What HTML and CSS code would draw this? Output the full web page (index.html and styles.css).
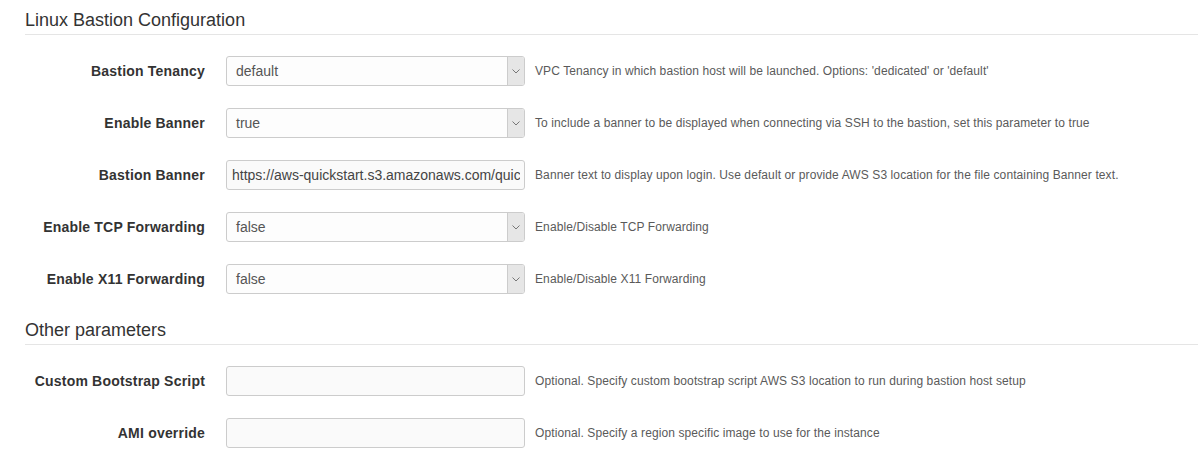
FILE: index.html
```html
<!DOCTYPE html>
<html>
<head>
<meta charset="utf-8">
<link rel="stylesheet" href="styles.css">
</head>
<body>
<div class="page">
  <section class="section">
    <h3 class="section-title">Linux Bastion Configuration</h3>
    <div class="rows">
      <div class="row">
        <label class="label">Bastion Tenancy</label>
        <div class="select"><span class="value">default</span><span class="arrow"><svg width="8" height="5" viewBox="0 0 8 5"><polyline points="0.5,0.5 4,4 7.5,0.5" fill="none" stroke="#777" stroke-width="1"/></svg></span></div>
        <div class="help">VPC Tenancy in which bastion host will be launched. Options: 'dedicated' or 'default'</div>
      </div>
      <div class="row">
        <label class="label">Enable Banner</label>
        <div class="select"><span class="value">true</span><span class="arrow"><svg width="8" height="5" viewBox="0 0 8 5"><polyline points="0.5,0.5 4,4 7.5,0.5" fill="none" stroke="#777" stroke-width="1"/></svg></span></div>
        <div class="help">To include a banner to be displayed when connecting via SSH to the bastion, set this parameter to true</div>
      </div>
      <div class="row">
        <label class="label">Bastion Banner</label>
        <input class="input" type="text" value="https://aws-quickstart.s3.amazonaws.com/quickstart-linux-bastion/scripts/banner_message.txt">
        <div class="help">Banner text to display upon login. Use default or provide AWS S3 location for the file containing Banner text.</div>
      </div>
      <div class="row">
        <label class="label">Enable TCP Forwarding</label>
        <div class="select"><span class="value">false</span><span class="arrow"><svg width="8" height="5" viewBox="0 0 8 5"><polyline points="0.5,0.5 4,4 7.5,0.5" fill="none" stroke="#777" stroke-width="1"/></svg></span></div>
        <div class="help">Enable/Disable TCP Forwarding</div>
      </div>
      <div class="row">
        <label class="label">Enable X11 Forwarding</label>
        <div class="select"><span class="value">false</span><span class="arrow"><svg width="8" height="5" viewBox="0 0 8 5"><polyline points="0.5,0.5 4,4 7.5,0.5" fill="none" stroke="#777" stroke-width="1"/></svg></span></div>
        <div class="help">Enable/Disable X11 Forwarding</div>
      </div>
    </div>
  </section>
  <section class="section">
    <h3 class="section-title">Other parameters</h3>
    <div class="rows">
      <div class="row">
        <label class="label">Custom Bootstrap Script</label>
        <input class="input" type="text" value="">
        <div class="help">Optional. Specify custom bootstrap script AWS S3 location to run during bastion host setup</div>
      </div>
      <div class="row">
        <label class="label">AMI override</label>
        <input class="input" type="text" value="">
        <div class="help">Optional. Specify a region specific image to use for the instance</div>
      </div>
    </div>
  </section>
</div>
</body>
</html>
```

FILE: styles.css
```css
html, body {
  margin: 0;
  padding: 0;
  background: #fff;
}
body {
  font-family: "Liberation Sans", Arial, sans-serif;
  color: #333;
}
.page {
  padding-left: 25px;
  padding-right: 1px;
  display: flex;
  flex-direction: column;
  gap: 16px;
}
.section-title {
  margin: 0 0 21px 0;
  padding: 10px 0 4px 0;
  font-size: 18px;
  line-height: 20px;
  font-weight: normal;
  color: #333;
  border-bottom: 1px solid #e5e5e5;
}
.rows {
  display: flex;
  flex-direction: column;
  gap: 22px;
}
.row {
  display: flex;
  align-items: center;
  height: 30px;
}
.label {
  width: 180px;
  flex: none;
  text-align: right;
  font-size: 14px;
  font-weight: bold;
  letter-spacing: 0.2px;
  color: #333;
  margin-right: 21px;
}
.select {
  box-sizing: border-box;
  width: 299px;
  height: 30px;
  flex: none;
  display: flex;
  border: 1px solid #ccc;
  border-radius: 3px;
  background: #fdfdfd;
  overflow: hidden;
}
.select .value {
  flex: 1;
  padding-left: 9px;
  font-size: 14px;
  line-height: 28px;
  color: #555;
}
.select .arrow {
  width: 16px;
  flex: none;
  display: flex;
  align-items: center;
  justify-content: center;
  background: #e6e6e6;
  border-left: 1px solid #ccc;
}
.input {
  box-sizing: border-box;
  width: 299px;
  height: 30px;
  flex: none;
  margin: 0;
  padding: 0 4px 0 5px;
  border: 1px solid #ccc;
  border-radius: 3px;
  background: #fafafa;
  font-family: "Liberation Sans", Arial, sans-serif;
  font-size: 14px;
  color: #444;
  outline: none;
}
.help {
  margin-left: 10px;
  font-size: 12px;
  letter-spacing: 0.1px;
  color: #5a5a5a;
  white-space: nowrap;
}
```
